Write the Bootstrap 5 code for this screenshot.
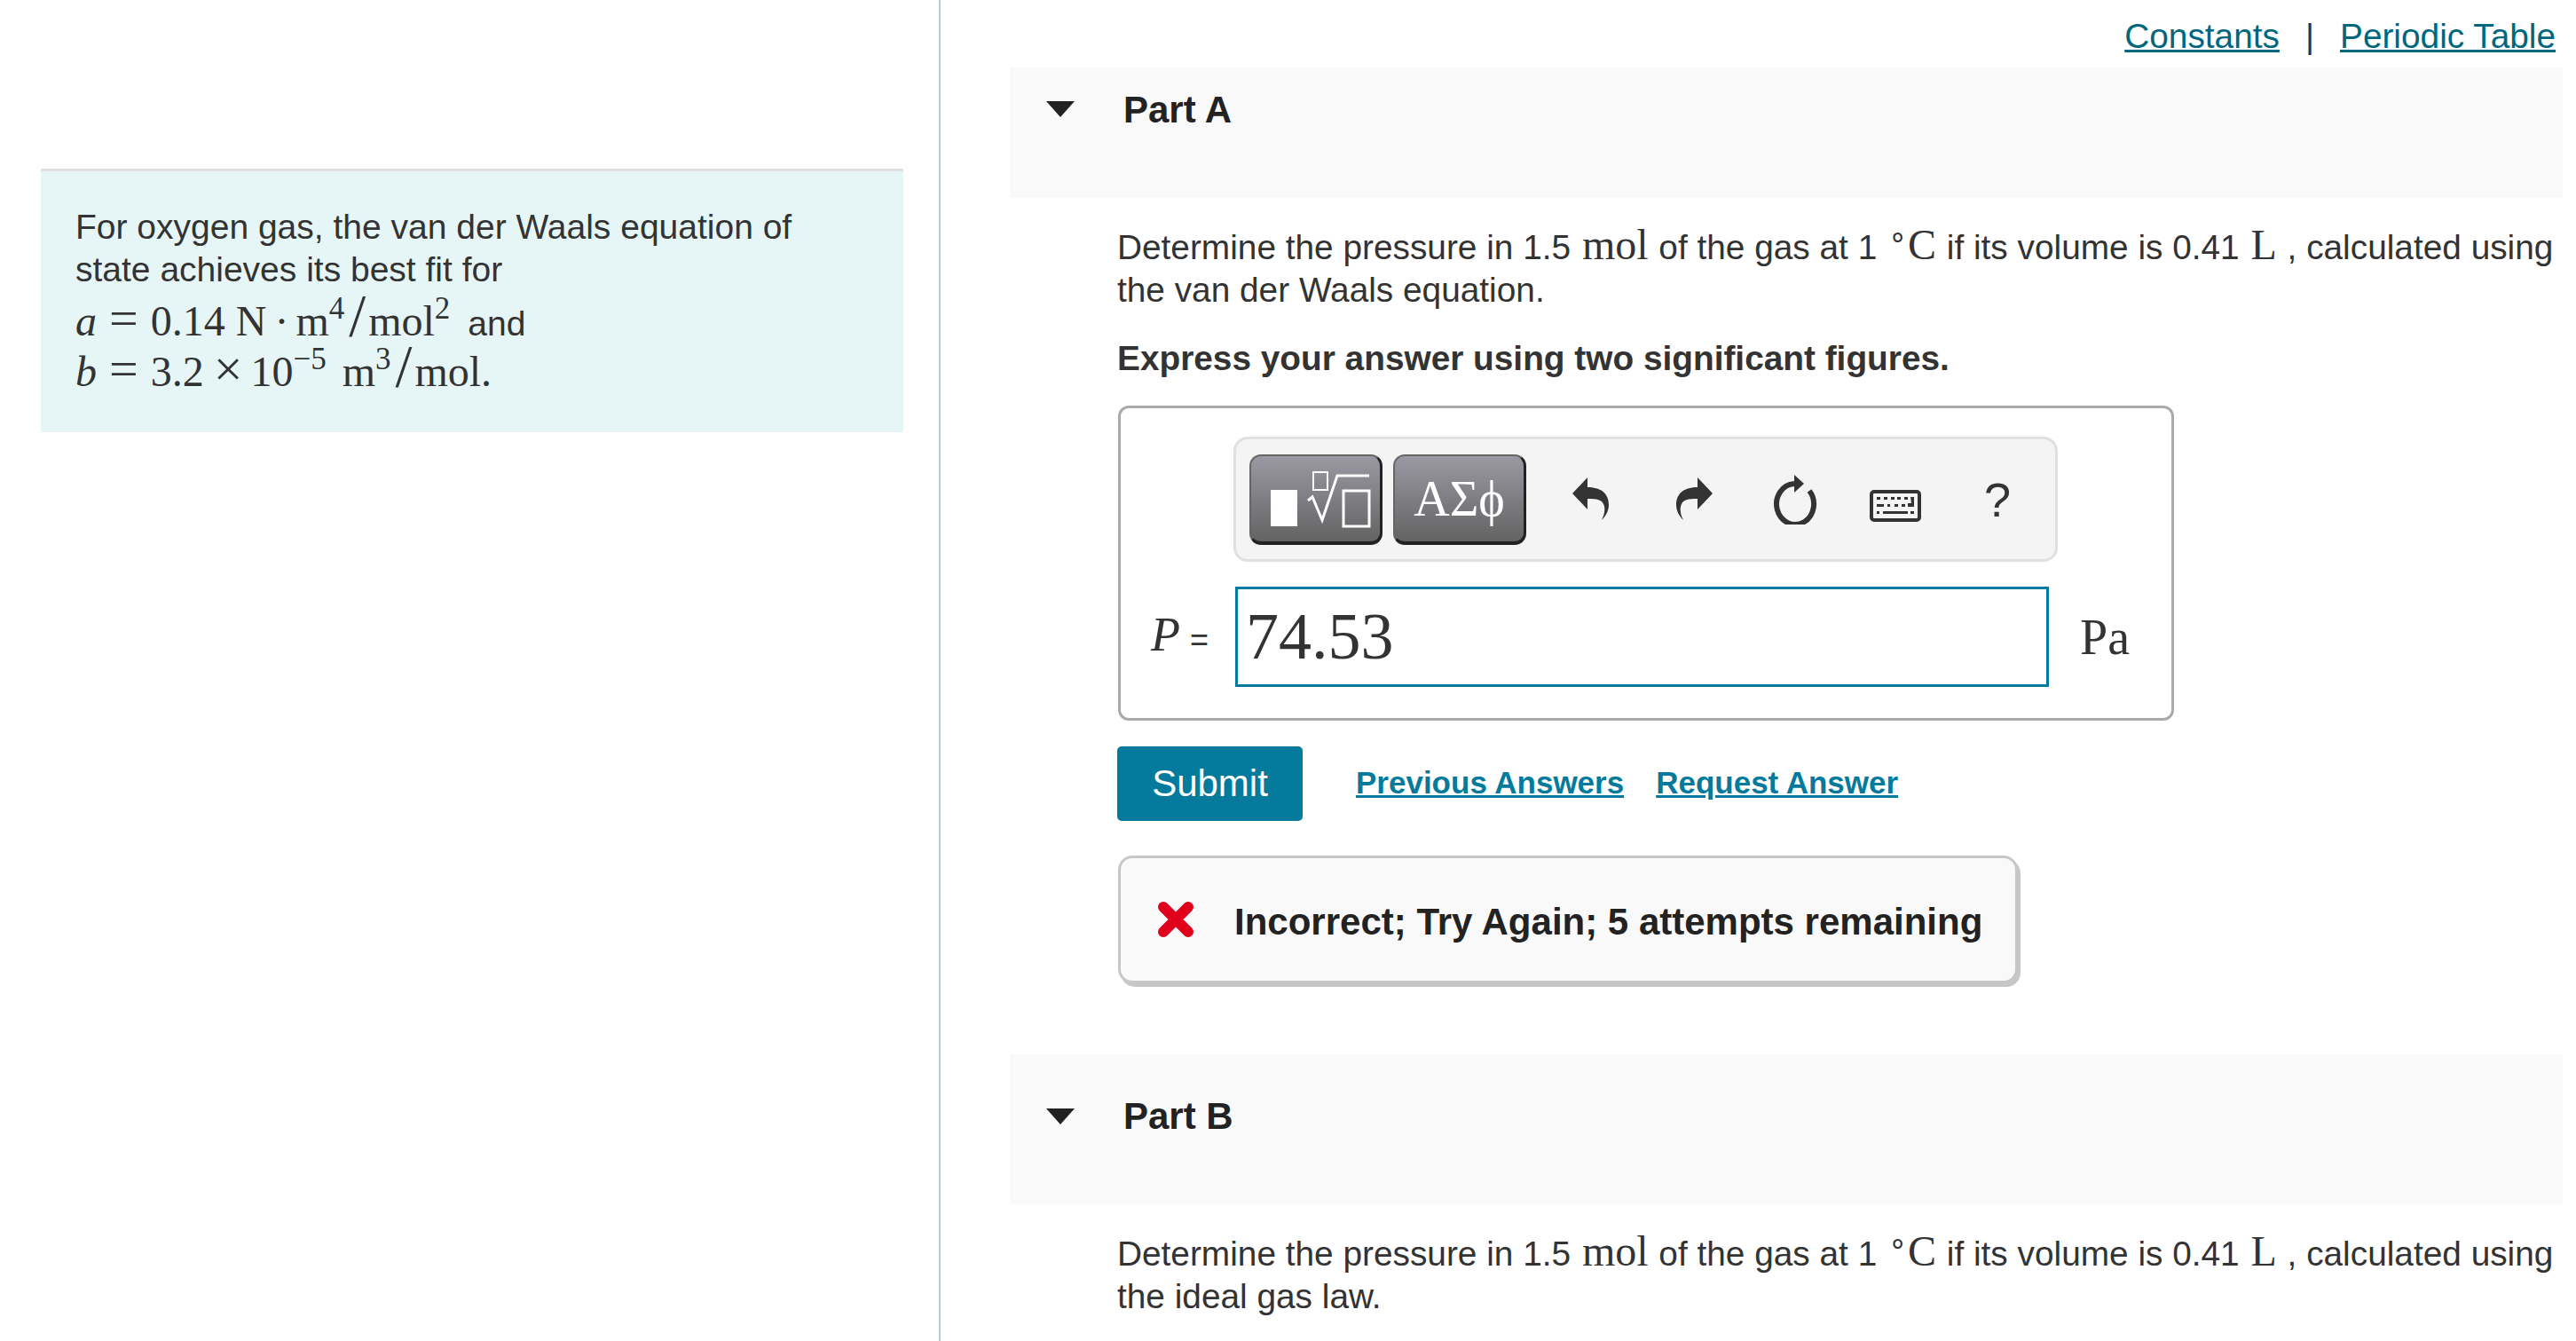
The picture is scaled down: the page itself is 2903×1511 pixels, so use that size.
<!DOCTYPE html>
<html lang="en">
<head>
    <meta charset="UTF-8">
    <meta name="viewport" content="width=device-width, initial-scale=1.0">
    <title>Part A</title>
    <link rel="stylesheet" href="https://cdn.jsdelivr.net/npm/bootstrap@5.3.2/dist/css/bootstrap.min.css">
    <style>
        body {
            font-family: "Liberation Sans", Arial, sans-serif;
            font-size: 38.8px;
            line-height: 48px;
            color: #333;
            background: #fff;
            overflow: hidden;
        }
        .left-col {
            width: 1060px;
            min-height: 1511px;
            flex: none;
            padding: 190px 40px 0 46px;
            border-right: 2px solid #bccbdb;
        }
        .intro-box {
            height: 297px;
            padding: 39px 40px 0 39px;
            background: #e6f6f7;
            border-top: 3px solid #e0e0e0;
            font-size: 39px;
        }
        .math { font-family: "Liberation Serif", serif; font-size: 48px; }
        .math-line { height: 57px; line-height: 57px; white-space: nowrap; }
        .math-first { margin-top: 5px; }
        .math sup { font-size: 35px; line-height: 0; top: -19px; position: relative; vertical-align: baseline; }
        .math .slash { font-size: 68px; line-height: 0; margin: 0 3px 0 5px; }
        .math .eq { font-size: 58px; line-height: 0; margin: 0 14px; }
        .math .times { font-size: 58px; line-height: 0; margin: 0 9px 0 11px; }
        .math .dot { margin: 0 8px 0 -3px; }
        .math .sup-end { margin-right: 8px; }
        .math .sup-gap { margin-right: 6px; }
        .math-sans { font-family: "Liberation Sans", sans-serif; font-size: 39px; }
        .right-col { width: 1750px; margin-left: 78px; flex: none; }
        .top-links { height: 76px; padding-top: 17px; margin-right: 8px; }
        .teal-link { color: #00677f; text-decoration-thickness: 3px; }
        .sep { margin: 0 29px; }
        .part-head { background: #f9f9f9; padding: 24px 0 0 41px; color: #222; }
        .part-a { height: 147px; }
        .part-b { height: 169px; padding-top: 25px; margin-top: 80px; }
        .part-b .caret-icon { margin-top: 36px; }
        .part-b .part-title { margin-top: 21px; }
        .part-title { font-size: 42px; }
        .caret-icon { width: 32px; height: 18px; margin: 14px 55px 0 0; flex: none; }
        .body-text { padding-left: 121px; margin: 29px 0 0; }
        .body-text .unit { font-family: "Liberation Serif", serif; font-size: 48px; margin: 0 1px 0 2px; }
        .body-text sup { font-size: 34px; top: -14px; line-height: 0; vertical-align: baseline; position: relative; margin-right: 1px; }
        .fit-note { padding-left: 121px; margin: 29px 0 0; }
        .answer-box {
            width: 1190px;
            height: 355px;
            margin: 29px 0 0 122px;
            padding: 32px 0 0 127px;
            border: 3px solid #aaa;
            border-radius: 12px;
        }
        .tool-bar {
            width: 929px;
            height: 141px;
            padding: 16px 15px;
            background: #f4f4f4;
            border: 3px solid #e0e0e0;
            border-radius: 16px;
        }
        .tool-btn {
            width: 150px;
            height: 102px;
            flex: none;
            padding: 0;
            border-style: solid;
            border-width: 2px 3px 4px 2px;
            border-color: #666 #222 #222 #666;
            border-radius: 13px;
            background: linear-gradient(#9a99a3, #636363);
            color: #fff;
            font-family: "Liberation Serif", serif;
            font-size: 56px;
            line-height: 1;
        }
        .tool-btn:hover { color: #fff; background: linear-gradient(#9a99a3, #636363); border-color: #666 #222 #222 #666; }
        .btn-gap { margin-right: 12px; }
        .undo-gap { margin-left: 52px; }
        .redo-gap { margin-left: 74px; }
        .reload-gap { margin-left: 68px; }
        .keys-gap { margin: 15px 0 0 59px; }
        .mark-help { font-size: 54px; line-height: 54px; color: #333; margin-left: 71px; }
        .value-row { margin: 28px 0 0 -127px; }
        .var-label { width: 129px; padding-left: 34px; flex: none; white-space: nowrap; font-size: 36px; }
        .var-label i { font-family: "Liberation Serif", serif; font-size: 54px; margin-right: 11px; }
        .value-input {
            width: 917px;
            height: 113px;
            flex: none;
            padding: 0 9px;
            border: 3px solid #047a9c;
            border-radius: 0;
            font-family: "Liberation Serif", serif;
            font-size: 74px;
            color: #333;
        }
        .unit-label { font-family: "Liberation Serif", serif; font-size: 56px; margin-left: 35px; }
        .action-row { margin: 29px 0 0 121px; }
        .submit-btn {
            width: 209px;
            height: 84px;
            padding: 0;
            border: 0;
            border-radius: 5px;
            background: #047a9c;
            color: #fff;
            font-size: 42px;
            line-height: 84px;
        }
        .action-link { color: #047a9c; font-size: 35px; font-weight: 700; margin: 0 0 2px 36px; text-decoration-thickness: 3px; }
        .action-link.first { margin-left: 60px; }
        .feedback-box {
            width: 1014px;
            height: 144px;
            margin: 39px 0 0 122px;
            padding-left: 42px;
            background: #f9f9f9;
            border: 3px solid #c7c7c7;
            border-radius: 16px;
            box-shadow: 3px 4px 0 #c7c7c7;
            color: #222;
            font-weight: 700;
            font-size: 42px;
            white-space: nowrap;
        }
        .feedback-text { padding-top: 5px; }
        .x-icon { width: 40px; height: 40px; margin-right: 46px; flex: none; }
    </style>
</head>
<body>
    <div class="d-flex">
        <!-- left panel -->
        <div class="left-col">
            <div class="intro-box">
                <div>For oxygen gas, the van der Waals equation of state achieves its best fit for</div>
                <div class="math math-line math-first"><i>a</i><span class="eq">=</span>0.14 N<span class="dot"> ·</span>m<sup>4</sup><span class="slash">/</span>mol<sup class="sup-end">2</sup> <span class="math-sans">and</span></div>
                <div class="math math-line"><i>b</i><span class="eq">=</span>3.2<span class="times">×</span>10<sup class="sup-gap">−5</sup> m<sup>3</sup><span class="slash">/</span>mol.</div>
            </div>
        </div>

        <!-- right panel -->
        <div class="right-col">
            <div class="top-links d-flex justify-content-end">
                <a class="teal-link" href="#">Constants</a><span class="sep">|</span><a class="teal-link" href="#">Periodic Table</a>
            </div>

            <div class="part-head part-a d-flex">
                <svg class="caret-icon" viewBox="0 0 32 18"><polygon points="0,0 32,0 16,18" fill="#222"/></svg>
                <div class="part-title fw-bold">Part A</div>
            </div>
            <p class="body-text">Determine the pressure in 1.5 <span class="unit">mol</span> of the gas at 1 <span class="unit"><sup>∘</sup>C</span> if its volume is 0.41 <span class="unit">L</span> , calculated using the van der Waals equation.</p>
            <p class="fit-note fw-bold">Express your answer using two significant figures.</p>

            <div class="answer-box">
                <div class="tool-bar d-flex align-items-center">
                    <button class="btn tool-btn btn-gap" type="button" aria-label="Templates">
                        <svg width="145" height="96" viewBox="0 0 145 96" class="d-block">
                            <rect x="22" y="38" width="30" height="41" fill="#fff"/>
                            <rect x="70" y="18" width="16" height="20" fill="none" stroke="#fff" stroke-width="2"/>
                            <path d="M64 50 L69 46 L80 72 L97 22 H133" fill="none" stroke="#fff" stroke-width="3"/>
                            <rect x="104" y="39" width="29" height="40" fill="none" stroke="#fff" stroke-width="3"/>
                        </svg>
                    </button>
                    <button class="btn tool-btn" type="button">ΑΣϕ</button>
                    <svg class="undo-gap" width="42" height="50" viewBox="0 0 42 50"><path d="M0 18 L17 0 V11 C31 11 41 17 41 31 C41 38 37 44 33 48 C37 40 37 34 35 30 C33 25 28 24 17 24 V36 Z" fill="#333"/></svg>
                    <svg class="redo-gap" width="42" height="50" viewBox="0 0 42 50"><path transform="translate(42 0) scale(-1 1)" d="M0 18 L17 0 V11 C31 11 41 17 41 31 C41 38 37 44 33 48 C37 40 37 34 35 30 C33 25 28 24 17 24 V36 Z" fill="#333"/></svg>
                    <svg class="reload-gap" width="50" height="56" viewBox="0 0 50 56">
                        <path d="M41 18 A21 23 0 1 1 24 10" fill="none" stroke="#333" stroke-width="6"/>
                        <polygon points="24,0 35,10 24,20" fill="#333"/>
                    </svg>
                    <svg class="keys-gap" width="58" height="36" viewBox="0 0 58 36">
                        <rect x="2" y="2" width="54" height="32" rx="3" fill="none" stroke="#333" stroke-width="4"/>
                        <path d="M8 8h4v3h-4zM16 8h4v3h-4zM24 8h4v3h-4zM31 8h4v3h-4zM39 8h4v3h-4zM46 8h4v11h-7v-4h4zM8 16h8v3h-8zM20 16h3v3h-3zM28 16h4v3h-4zM36 16h4v3h-4zM8 24h3v3h-3zM15 24h28v3h-28zM46 24h4v3h-4z" fill="#333"/>
                    </svg>
                    <span class="mark-help">?</span>
                </div>
                <div class="value-row d-flex align-items-center">
                    <div class="var-label"><i>P</i>=</div>
                    <input class="form-control value-input" type="text" value="74.53" aria-label="P">
                    <div class="unit-label">Pa</div>
                </div>
            </div>

            <div class="action-row d-flex align-items-center">
                <button class="btn submit-btn" type="button">Submit</button>
                <a class="action-link first" href="#">Previous Answers</a>
                <a class="action-link" href="#">Request Answer</a>
            </div>

            <div class="feedback-box d-flex align-items-center">
                <svg class="x-icon" viewBox="0 0 40 40"><path d="M6 6 L34 34 M34 6 L6 34" stroke="#e0001b" stroke-width="12" stroke-linecap="round"/></svg>
                <span class="feedback-text">Incorrect; Try Again; 5 attempts remaining</span>
            </div>

            <div class="part-head part-b d-flex">
                <svg class="caret-icon" viewBox="0 0 32 18"><polygon points="0,0 32,0 16,18" fill="#222"/></svg>
                <div class="part-title fw-bold">Part B</div>
            </div>
            <p class="body-text">Determine the pressure in 1.5 <span class="unit">mol</span> of the gas at 1 <span class="unit"><sup>∘</sup>C</span> if its volume is 0.41 <span class="unit">L</span> , calculated using the ideal gas law.</p>
        </div>
    </div>
    <script src="https://cdn.jsdelivr.net/npm/bootstrap@5.3.2/dist/js/bootstrap.bundle.min.js"></script>
</body>
</html>
